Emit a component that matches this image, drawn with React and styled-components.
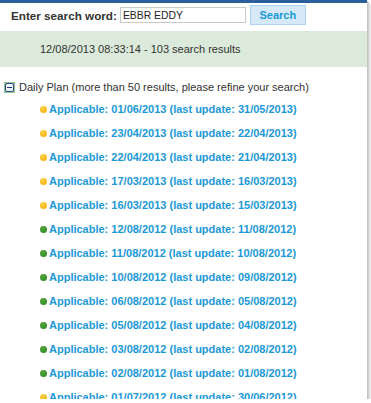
import React from "react";
import styled, { createGlobalStyle } from "styled-components";

const Global = createGlobalStyle`
  html, body { margin: 0; padding: 0; background: #ffffff; }
  body { font-family: "Liberation Sans", Arial, sans-serif; }
`;

const Page = styled.div`
  width: 367px;
  height: 399px;
  overflow: hidden;
  background: #ffffff;
  box-shadow: 1px 1px 0 #c4c4c4, 2px 2px 0 #d2d2d2, 3px 3px 0 #e0e0e0, 4px 4px 0 #ededed;
  display: flex;
  flex-direction: column;
`;

const TopBar = styled.div`
  height: 3px;
  background: #2b609c;
  flex: none;
`;

const SearchRow = styled.div`
  height: 24px;
  margin-bottom: 4px;
  padding-left: 11px;
  display: flex;
  align-items: center;
  flex: none;
`;

const Label = styled.label`
  font-size: 11.7px;
  font-weight: bold;
  color: #333333;
  margin-right: 3px;
  white-space: nowrap;
`;

const Input = styled.input`
  box-sizing: border-box;
  width: 126px;
  height: 16px;
  border: 1px solid #c8c8c8;
  padding: 0 0 0 2px;
  margin: 0 4px 0 0;
  font-family: "Liberation Sans", Arial, sans-serif;
  font-size: 10.4px;
  color: #222222;
  outline: none;
`;

const Button = styled.button`
  box-sizing: border-box;
  width: 56px;
  height: 20px;
  background: #d6e9f8;
  border: 1px solid #aed3f0;
  padding: 0;
  font-family: "Liberation Sans", Arial, sans-serif;
  font-size: 11px;
  font-weight: bold;
  color: #1a9ad8;
  cursor: pointer;
`;

const Band = styled.div`
  height: 36px;
  background: #dceadb;
  padding-left: 40px;
  display: flex;
  align-items: center;
  font-size: 11px;
  color: #333333;
  flex: none;
`;

const TreeHeader = styled.div`
  margin-top: 10px;
  height: 20px;
  padding-left: 4px;
  display: flex;
  align-items: center;
  gap: 4px;
  font-size: 11px;
  color: #333333;
  white-space: nowrap;
  flex: none;
`;

const List = styled.ul`
  list-style: none;
  margin: 0;
  padding: 0 0 0 40px;
  flex: none;
`;

const Item = styled.li`
  height: 24px;
  display: flex;
  align-items: center;
  gap: 2px;
  white-space: nowrap;
`;

const Dot = styled.span`
  width: 7px;
  height: 7px;
  border-radius: 50%;
  flex: none;
  background: ${(p) =>
    p.$status === "green"
      ? "radial-gradient(circle at 40% 35%, #4fa83c, #2d7f22)"
      : "radial-gradient(circle at 40% 35%, #ffd24a, #f0a800)"};
`;

const ItemLink = styled.a`
  font-size: 11px;
  font-weight: bold;
  color: #1b98d8;
  text-decoration: none;
`;

const Toggle = () => (
  <svg width="11" height="11" viewBox="0 0 11 11" style={{ flex: "none" }}>
    <rect x="0" y="0" width="11" height="11" fill="#93c493" />
    <rect x="1.5" y="1.5" width="8" height="8" rx="1.5" fill="#eef2fa" stroke="#2c4a86" />
    <rect x="3" y="5" width="5" height="1" fill="#1c3a80" />
  </svg>
);

const items = [
  ["01/06/2013", "31/05/2013", "yellow"],
  ["23/04/2013", "22/04/2013", "yellow"],
  ["22/04/2013", "21/04/2013", "yellow"],
  ["17/03/2013", "16/03/2013", "yellow"],
  ["16/03/2013", "15/03/2013", "yellow"],
  ["12/08/2012", "11/08/2012", "green"],
  ["11/08/2012", "10/08/2012", "green"],
  ["10/08/2012", "09/08/2012", "green"],
  ["06/08/2012", "05/08/2012", "green"],
  ["05/08/2012", "04/08/2012", "green"],
  ["03/08/2012", "02/08/2012", "green"],
  ["02/08/2012", "01/08/2012", "green"],
  ["01/07/2012", "30/06/2012", "yellow"],
];

export default function App() {
  return (
    <>
      <Global />
      <Page>
        <TopBar />
        <SearchRow>
          <Label htmlFor="sw">Enter search word:</Label>
          <Input id="sw" defaultValue="EBBR EDDY" />
          <Button>Search</Button>
        </SearchRow>
        <Band>12/08/2013 08:33:14 - 103 search results</Band>
        <TreeHeader>
          <Toggle />
          <span>Daily Plan (more than 50 results, please refine your search)</span>
        </TreeHeader>
        <List>
          {items.map(([a, u, s]) => (
            <Item key={a}>
              <Dot $status={s} />
              <ItemLink href="#">
                Applicable: {a} (last update: {u})
              </ItemLink>
            </Item>
          ))}
        </List>
      </Page>
    </>
  );
}
